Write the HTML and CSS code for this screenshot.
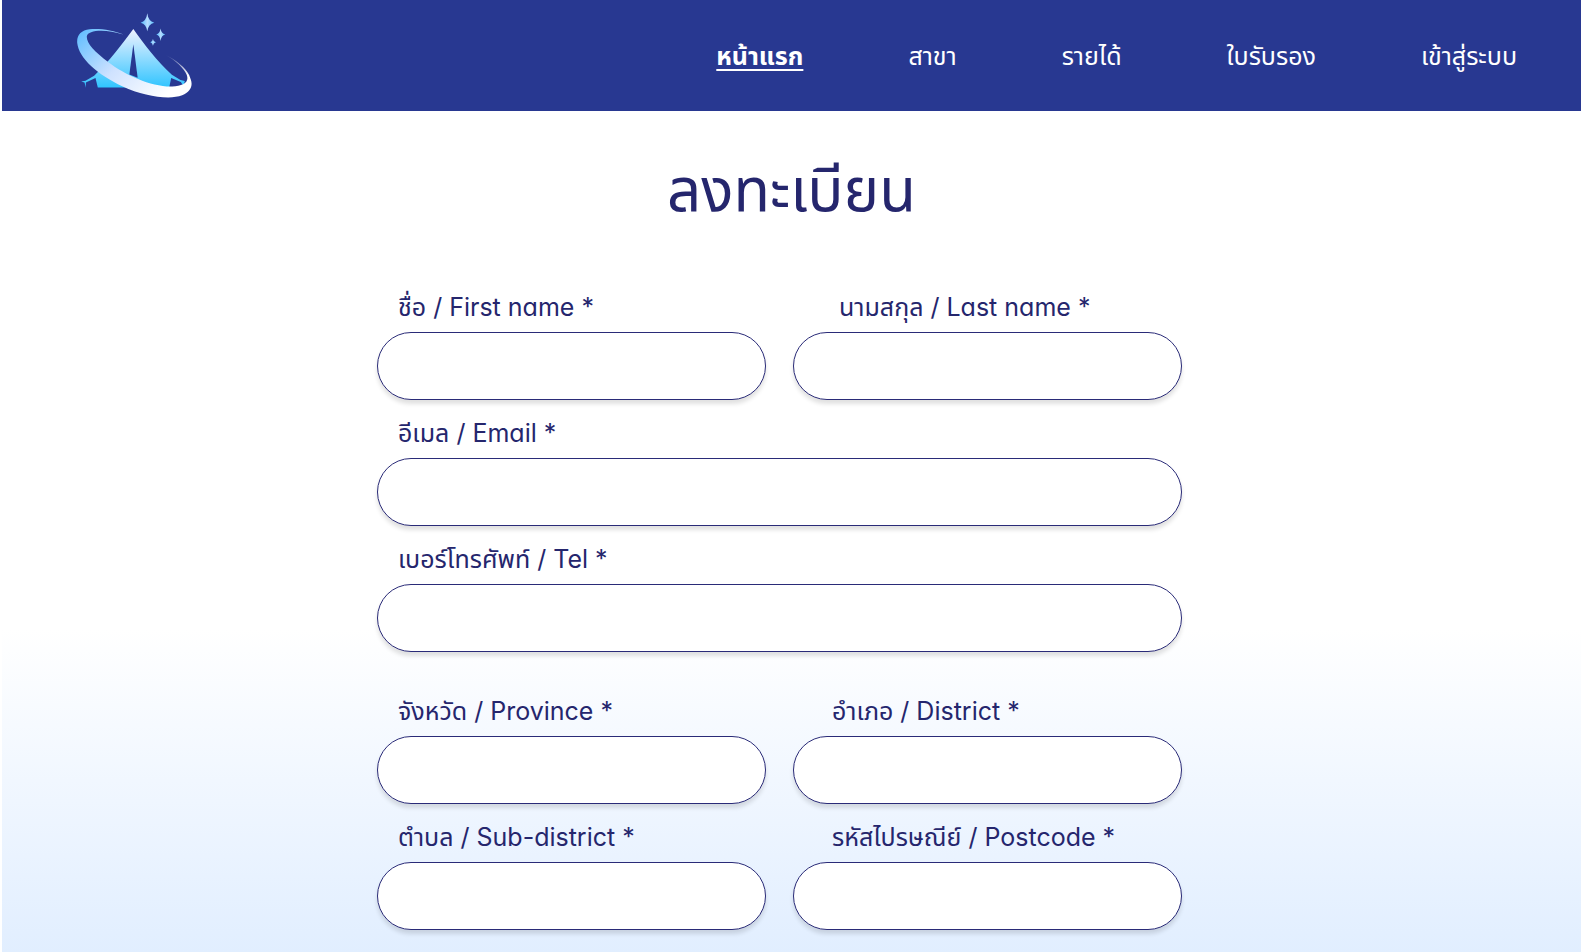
FILE: index.html
```html
<!DOCTYPE html>
<html lang="th">
<head>
<meta charset="utf-8">
<meta name="viewport" content="width=device-width, initial-scale=1">
<title>ลงทะเบียน</title>
<link rel="stylesheet" href="styles.css">
</head>
<body>
<div class="page">
  <header class="site-header">
    <a class="logo" href="#" aria-label="หน้าแรก">
      <svg class="logo-mark" viewBox="45 35 360 265" aria-hidden="true">
        <defs>
          <linearGradient id="tent" x1="0" y1="0" x2="0" y2="1">
            <stop offset="0" stop-color="#f0f2ff"/>
            <stop offset="1" stop-color="#2fc4ff"/>
          </linearGradient>
          <linearGradient id="ring" x1="0" y1="0" x2="1" y2="0.6">
            <stop offset="0" stop-color="#5cbcff"/>
            <stop offset="0.5" stop-color="#cfe2ff"/>
            <stop offset="1" stop-color="#ffffff"/>
          </linearGradient>
          <linearGradient id="tail" gradientUnits="userSpaceOnUse" x1="315" y1="163" x2="388" y2="225">
            <stop offset="0" stop-color="#ffffff" stop-opacity="0"/>
            <stop offset="1" stop-color="#ffffff"/>
          </linearGradient>
          <linearGradient id="star" x1="0" y1="0" x2="1" y2="0">
            <stop offset="0" stop-color="#4fbaff"/>
            <stop offset="0.5" stop-color="#b5dcff"/>
            <stop offset="1" stop-color="#5fc2ff"/>
          </linearGradient>
        </defs>
        <path fill="url(#tent)" d="M220 86C250 128 292 184 336 224L362 240L375 243L371 258L363 246L334 234L328 262H113L106 234L77 247V263L73 247L63 244L76 242L102 227C146 185 190 126 220 86Z"/>
        <path fill="#283891" d="M220 132L233 233L208 223Z"/>
        <path fill="url(#ring)" d="M190 103C160 90 120 84 88 87C63 90 49 104 51 128C56 174 112 223 188 259C251 288 327 301 367 286C392 276 400 258 393 238L388 225L381 225C389 248 369 257 337 259C276 261 196 225 145 186C102 154 78 128 80 108C83 88 139 86 190 103Z"/>
        <path fill="url(#tail)" d="M388 225C377 203 350 180 315 163C350 183 373 205 381 225Z"/>
        <g fill="url(#star)">
          <path d="M262 39Q265 63 283 67Q265 71 262 93Q259 71 242 67Q259 63 262 39Z"/>
          <path d="M302 85Q304 100 316 103Q304 106 302 122Q300 106 289 103Q300 100 302 85Z"/>
          <path d="M279 116Q280 124 288 126Q280 128 279 137Q278 128 271 126Q278 124 279 116Z"/>
        </g>
      </svg>
    </a>
    <nav class="nav" aria-label="เมนูหลัก">
      <a class="nav-link nav-link-active" href="#" aria-current="page">หน้าแรก</a>
      <a class="nav-link" href="#">สาขา</a>
      <a class="nav-link" href="#">รายได้</a>
      <a class="nav-link" href="#">ใบรับรอง</a>
      <a class="nav-link" href="#">เข้าสู่ระบบ</a>
    </nav>
  </header>
  <main class="content">
    <h1 class="title">ลงทะเบียน</h1>
    <form class="form">
      <div class="group">
        <div class="field">
          <label class="label" for="first-name">ชื่อ / First name *</label>
          <input class="input" id="first-name" type="text" required>
        </div>
        <div class="field">
          <label class="label label-last-name" for="last-name">นามสกุล / Last name *</label>
          <input class="input" id="last-name" type="text" required>
        </div>
        <div class="field field-wide">
          <label class="label" for="email">อีเมล / Email *</label>
          <input class="input" id="email" type="email" required>
        </div>
        <div class="field field-wide">
          <label class="label" for="tel">เบอร์โทรศัพท์ / Tel *</label>
          <input class="input" id="tel" type="tel" required>
        </div>
      </div>
      <div class="group">
        <div class="field">
          <label class="label" for="province">จังหวัด / Province *</label>
          <input class="input" id="province" type="text" required>
        </div>
        <div class="field">
          <label class="label label-second" for="district">อำเภอ / District *</label>
          <input class="input" id="district" type="text" required>
        </div>
        <div class="field">
          <label class="label" for="sub-district">ตำบล / Sub-district *</label>
          <input class="input" id="sub-district" type="text" required>
        </div>
        <div class="field">
          <label class="label label-second" for="postcode">รหัสไปรษณีย์ / Postcode *</label>
          <input class="input" id="postcode" type="text" required>
        </div>
      </div>
    </form>
  </main>
</div>
</body>
</html>
```
FILE: styles.css
```css
*, *::before, *::after { box-sizing: border-box; }

body {
  margin: 0;
  background: #fff;
  color: #25266d;
  font-family: Inter, "Noto Sans Thai", "Noto Sans", sans-serif;
  font-size: 25px;
  font-feature-settings: "cv11";
}

.page {
  min-height: 100vh;
  margin-left: 2px;
  background: linear-gradient(to bottom, #fff 66%, #e1eeff 100%);
}

.site-header {
  display: flex;
  align-items: center;
  justify-content: space-between;
  height: 111px;
  padding: 0 64px 0 73px;
  background: #283891;
}

.logo { display: block; }

.logo-mark {
  display: block;
  width: 120px;
  height: 88px;
}

.nav {
  display: flex;
  gap: 105px;
}

.nav-link {
  color: #fff;
  font-weight: 400;
  line-height: 40px;
  text-decoration: none;
}

.nav-link-active {
  font-weight: 700;
  text-decoration: underline;
  text-decoration-thickness: 2px;
  text-underline-offset: 4px;
}

.title {
  margin: 0;
  padding: 38px 0 58px;
  font-size: 60px;
  font-weight: 400;
  line-height: 80px;
  text-align: center;
}

.content { padding-bottom: 23px; }

.form {
  display: flex;
  flex-direction: column;
  gap: 39px;
  width: 100%;
  max-width: 829px;
  margin: 0 auto;
  padding-right: 24px;
}

.group {
  display: grid;
  grid-template-columns: 1fr 1fr;
  gap: 13px 27px;
}

.field {
  display: flex;
  flex-direction: column;
}

.field-wide { grid-column: 1 / -1; }

.label {
  padding: 0 21px 5px;
  font-weight: 400;
  line-height: 40px;
}

.label-second { padding-left: 39px; }
.label-last-name { padding-left: 46px; }

.input {
  width: 100%;
  height: 68px;
  padding: 0 32px;
  border: 1px solid #2a2b78;
  border-radius: 34px;
  background: #fff;
  box-shadow: 0 4px 4px rgba(0, 0, 0, 0.12);
  color: inherit;
  font: inherit;
}
```
